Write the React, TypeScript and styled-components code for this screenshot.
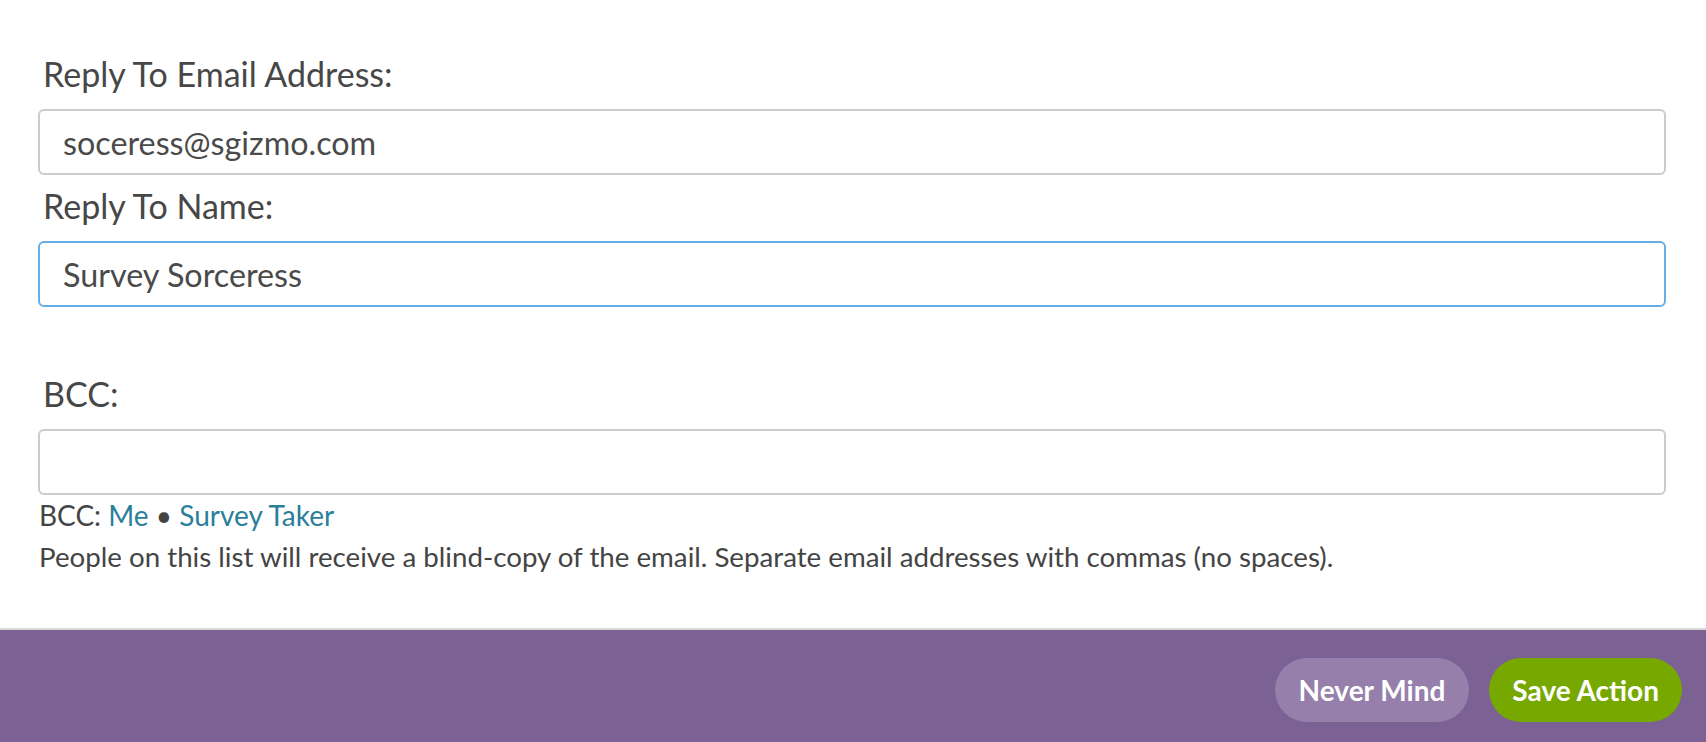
import React from "react";
import styled, { createGlobalStyle } from "styled-components";

const Global = createGlobalStyle`
  html, body { margin: 0; padding: 0; background: #ffffff; }
  body { font-family: Lato, "Open Sans", sans-serif; color: #4a4a4a; }
  * { box-sizing: border-box; }
`;

const Page = styled.div`
  width: 1706px;
  height: 742px;
  display: flex;
  flex-direction: column;
  overflow: hidden;
`;

const Form = styled.div`
  flex: 1;
  display: flex;
  flex-direction: column;
  padding: 54px 40px 0 38px;
`;

const Group = styled.div<{ $top?: number }>`
  display: flex;
  flex-direction: column;
  margin-top: ${(p) => p.$top ?? 0}px;
`;

const Label = styled.label`
  font-family: Lato, sans-serif;
  font-size: 34px;
  line-height: 40px;
  color: #474747;
  padding-left: 5px;
  margin-bottom: 15px;
`;

const Input = styled.input<{ $focused?: boolean }>`
  width: 100%;
  height: 66px;
  border: 2px solid ${(p) => (p.$focused ? "#66aee8" : "#cccccc")};
  border-radius: 6px;
  padding: 0 23px;
  font-family: Lato, sans-serif;
  font-size: 32.3px;
  color: #4a4a4a;
  background: #fff;
  outline: none;
`;

const Help = styled.div<{ $top?: number; $size?: number }>`
  font-family: Lato, sans-serif;
  font-size: ${(p) => p.$size ?? 28}px;
  line-height: 40px;
  color: #444444;
  padding-left: 1px;
  margin-top: ${(p) => p.$top ?? 0}px;
`;

const Link = styled.a`
  color: #2b7f9a;
  text-decoration: none;
  cursor: pointer;
`;

const Footer = styled.div`
  height: 114px;
  border-top: 2px solid #d9d9d9;
  background: #7c6195;
  display: flex;
  justify-content: flex-end;
  align-items: flex-start;
  gap: 20px;
  padding: 28px 24px 0 0;
`;

const Pill = styled.button<{ $primary?: boolean }>`
  height: 64px;
  border: none;
  border-radius: 32px;
  padding: 0 ${(p) => (p.$primary ? 23 : 24)}px;
  background: ${(p) => (p.$primary ? "#77a800" : "#967fab")};
  color: #ffffff;
  font-family: Lato, sans-serif;
  font-weight: 700;
  font-size: 28px;
  cursor: pointer;
`;

export default function App() {
  return (
    <Page>
      <Global />
      <Form>
        <Group>
          <Label>Reply To Email Address:</Label>
          <Input defaultValue="soceress@sgizmo.com" />
        </Group>
        <Group $top={11}>
          <Label>Reply To Name:</Label>
          <Input $focused defaultValue="Survey Sorceress" />
        </Group>
        <Group $top={67}>
          <Label>BCC:</Label>
          <Input defaultValue="" />
        </Group>
        <Help>
          BCC: <Link>Me</Link> • <Link>Survey Taker</Link>
        </Help>
        <Help $top={2} $size={27.7}>
          People on this list will receive a blind-copy of the email. Separate email addresses with commas (no spaces).
        </Help>
      </Form>
      <Footer>
        <Pill>Never Mind</Pill>
        <Pill $primary>Save Action</Pill>
      </Footer>
    </Page>
  );
}
